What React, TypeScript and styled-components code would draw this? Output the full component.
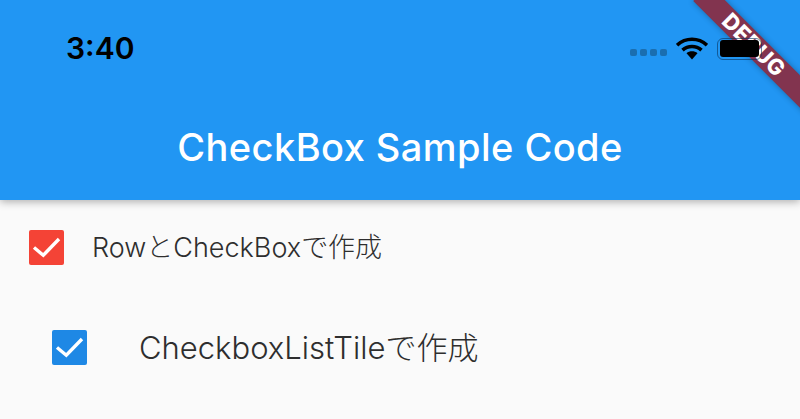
import React from "react";
import styled, { createGlobalStyle } from "styled-components";

const Global = createGlobalStyle`
  html, body { margin: 0; padding: 0; background: #fafafa; }
  body { font-family: Inter, "Noto Sans CJK JP", sans-serif; overflow: hidden; }
`;

const Page = styled.div`
  position: relative;
  width: 800px;
  height: 419px;
  overflow: hidden;
  background: #fafafa;
`;

const AppBar = styled.header`
  height: 200px;
  box-sizing: border-box;
  background: #2196f3;
  box-shadow: 0 2px 8px rgba(0, 0, 0, 0.3);
  display: flex;
  flex-direction: column;
`;

const StatusBar = styled.div`
  height: 96px;
  box-sizing: border-box;
  padding: 30px 0 0 66px;
  display: flex;
  align-items: flex-start;
`;

const Clock = styled.span`
  font-family: Inter, sans-serif;
  font-size: 30px;
  line-height: 36px;
  font-weight: 600;
  color: #000;
`;

const StatusIcons = styled.div`
  margin-left: auto;
  margin-right: 38px;
  margin-top: 7px;
  display: flex;
  align-items: center;
  gap: 9px;
`;

const Signal = styled.div`
  display: flex;
  gap: 3px;
  margin-top: 8px;
`;

const SignalDot = styled.i`
  width: 7px;
  height: 7px;
  border-radius: 2px;
  background: #1a6eb0;
`;

const Battery = styled.div`
  position: relative;
  z-index: 2;
  width: 45px;
  height: 22px;
  box-sizing: border-box;
  border: 1.5px solid rgba(10, 50, 90, 0.6);
  border-radius: 6px;
  padding: 1.5px 2.5px 1.5px 1.5px;
`;

const BatteryFill = styled.div`
  height: 100%;
  background: #000;
  border-radius: 3px;
`;

const Title = styled.h1`
  margin: 0;
  text-align: center;
  font-family: Inter, sans-serif;
  font-size: 38px;
  line-height: 44px;
  font-weight: 500;
  letter-spacing: 0.45px;
  color: #fff;
  padding-top: 29px;
`;

const List = styled.main`
  display: flex;
  flex-direction: column;
`;

const RowItem = styled.div<{ $indent: number; $height: number; $gap: number }>`
  height: ${(p) => p.$height}px;
  padding-left: ${(p) => p.$indent}px;
  display: flex;
  align-items: center;
  gap: ${(p) => p.$gap}px;
`;

const Box = styled.div<{ $color: string }>`
  width: 35px;
  height: 35px;
  border-radius: 2px;
  background: ${(p) => p.$color};
  display: flex;
  flex: none;
`;

const Label = styled.span<{ $size: number }>`
  font-family: Inter, "Noto Sans CJK JP", sans-serif;
  font-size: ${(p) => p.$size}px;
  font-weight: 350;
  color: #2e2e2e;
  white-space: nowrap;
  padding-bottom: 3px;
`;

const Jp = styled.span`
  font-weight: 300;
`;

const Ribbon = styled.div`
  position: absolute;
  z-index: 1;
  top: 45px;
  left: 675px;
  width: 180px;
  height: 23px;
  box-sizing: border-box;
  padding-right: 32px;
  background: #82344f;
  transform: rotate(45deg);
  color: #fff;
  font-family: Inter, sans-serif;
  font-size: 22px;
  font-weight: 800;
  line-height: 23px;
  text-align: center;
  letter-spacing: 0.5px;
  box-shadow: 0 0 6px rgba(0, 0, 0, 0.3);
`;

const Check = () => (
  <svg width="35" height="35" viewBox="0 0 35 35">
    <path d="M5 17.5l9.3 7.8L30 9" fill="none" stroke="#fff" strokeWidth="3.4" />
  </svg>
);

const Wifi = () => (
  <svg width="32" height="23" viewBox="0 0 32 23">
    <path d="M1 8.2C9.5 0.3 22.5 0.3 31 8.2" fill="none" stroke="#000" strokeWidth="3.6" />
    <path d="M6.5 13.2C12 8.2 20 8.2 25.5 13.2" fill="none" stroke="#000" strokeWidth="3.6" />
    <path d="M10.5 16.2 16 22.5 21.5 16.2C18.5 13.6 13.5 13.6 10.5 16.2Z" fill="#000" />
  </svg>
);

export default function App() {
  return (
    <Page>
      <Global />
      <AppBar>
        <StatusBar>
          <Clock>3:40</Clock>
          <StatusIcons>
            <Signal>
              <SignalDot />
              <SignalDot />
              <SignalDot />
              <SignalDot />
            </Signal>
            <Wifi />
            <Battery>
              <BatteryFill />
            </Battery>
          </StatusIcons>
        </StatusBar>
        <Title>CheckBox Sample Code</Title>
      </AppBar>
      <List>
        <RowItem $indent={29} $height={94} $gap={28}>
          <Box $color="#f44336">
            <Check />
          </Box>
          <Label $size={27}>
            Row<Jp>と</Jp>CheckBox<Jp>で作成</Jp>
          </Label>
        </RowItem>
        <RowItem $indent={52} $height={106} $gap={52}>
          <Box $color="#1e88e5">
            <Check />
          </Box>
          <Label $size={31}>
            CheckboxListTile<Jp>で作成</Jp>
          </Label>
        </RowItem>
      </List>
      <Ribbon>DEBUG</Ribbon>
    </Page>
  );
}
